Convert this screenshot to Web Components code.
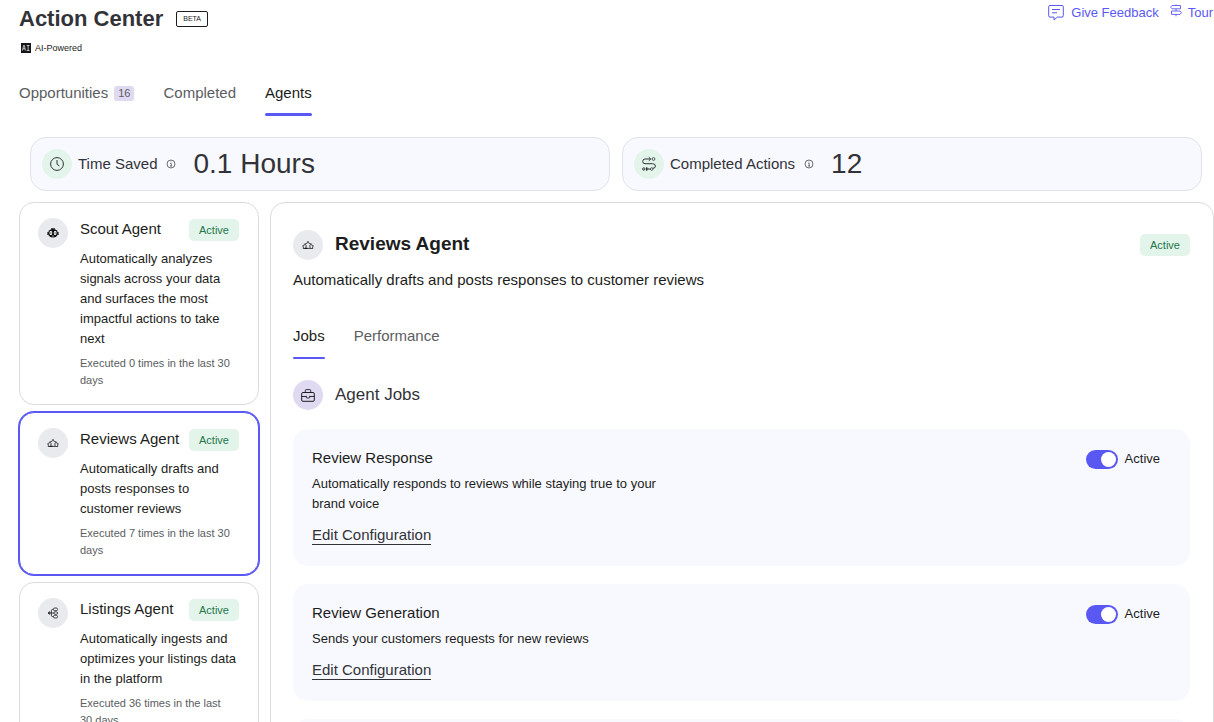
<!DOCTYPE html>
<html lang="en">
<head>
<meta charset="UTF-8">
<meta name="viewport" content="width=device-width, initial-scale=1.0">
<title>Action Center</title>
<style>
    html {
        scrollbar-width: none;
    }
    body {
        margin: 0;
        background-color: white;
        color: #1c1d20;
        font-family: "Liberation Sans", Arial, sans-serif;
        font-size: 15px;
        --accent: #5a58f2;
        --border: #dadbe0;
        --muted: #5b5d61;
        --heading: #323338;
        --surface: #f8f9ff;
    }
    main {
        padding: 6px 0 0 19px;
    }
    .stats {
        display: grid;
        grid-template-columns: 1fr 1fr;
        gap: 12px;
        margin: 21px 12px 11px 11px;
    }
    .content {
        display: grid;
        grid-template-columns: 240px 1fr;
        gap: 11px;
    }
    .agents {
        display: flex;
        flex-direction: column;
        gap: 7px;
    }
</style>
</head>
<body>
<main>
    <page-header>Action Center</page-header>
    <tab-bar size="large">
        <tab-item count="16">Opportunities</tab-item>
        <tab-item>Completed</tab-item>
        <tab-item active>Agents</tab-item>
    </tab-bar>
    <section class="stats">
        <stat-card icon="clock" value="0.1 Hours">Time Saved</stat-card>
        <stat-card icon="route" value="12">Completed Actions</stat-card>
    </section>
    <div class="content">
        <div class="agents">
            <agent-card icon="robot" name="Scout Agent" executed="Executed 0 times in the last 30 days">Automatically analyzes signals across your data and surfaces the most impactful actions to take next</agent-card>
            <agent-card selected icon="stars" name="Reviews Agent" executed="Executed 7 times in the last 30 days">Automatically drafts and posts responses to customer reviews</agent-card>
            <agent-card icon="listings" name="Listings Agent" executed="Executed 36 times in the last 30 days">Automatically ingests and optimizes your listings data in the platform</agent-card>
        </div>
        <agent-panel icon="stars" name="Reviews Agent" description="Automatically drafts and posts responses to customer reviews">
            <job-card name="Review Response">Automatically responds to reviews while staying true to your brand voice</job-card>
            <job-card name="Review Generation">Sends your customers requests for new reviews</job-card>
            <job-card></job-card>
        </agent-panel>
    </div>
</main>

<script>
const icons = {
    feedback: `<svg width="16" height="17" viewBox="0 0 16 17"><path d="M2 1.5h12q1.3 0 1.3 1.3v9q0 1.3-1.3 1.3H9.2L6 16v-2.9H2q-1.3 0-1.3-1.3v-9q0-1.3 1.300-1.3zM4 5.500h8M4 8.800h5"/></svg>`,
    signpost: `<svg width="12" height="13" viewBox="0 0 12 13" stroke-width=".9"><path d="M6 .5v1M6 4.800V7M6 10.400v2M2 1.500h8.500v3.300H2L.6 3.200zM1.500 7H10l1.400 1.700-1.400 1.700H1.500z"/></svg>`,
    info: `<svg width="10" height="10" viewBox="0 0 10 10" stroke-width=".7"><circle cx="5" cy="5" r="4"/><path d="M4.300 4.500h.9v2.600M4.100 7.100h2M5 2.700v.8"/></svg>`,
    clock: `<svg width="16" height="16" viewBox="0 0 16 16"><circle cx="8" cy="8" r="6.400"/><path d="M8 4v4.200l2.400 1.800"/></svg>`,
    route: `<svg width="16" height="16" viewBox="0 0 16 16"><path d="M9.500 3H4Q1.700 3 1.700 5.400T4 7.700h7.500q2.900 0 2.900 2.300t-2.500 2.300M7.800 1.200L9.800 3 7.800 4.800"/><circle cx="12.500" cy="3" r="1.400" stroke-width=".8"/><circle cx="2.800" cy="13" r="1.200"/><circle cx="10.700" cy="13" r="1.300" stroke-width=".8"/><path d="M5.500 11.500L7.500 13l-2 1.500zM7.500 13h1.500"/></svg>`,
    robot: `<svg width="12" height="12" viewBox="0 0 12 12"><ellipse cx="6" cy="6.300" rx="5" ry="4.300" fill="#111" stroke="none"/><path d="M.9 5v3M11.100 5v3M4 1.800h4" stroke="#111"/><rect x="2.600" y="4" width="2.500" height="4" rx="1.200" fill="#fff" stroke="none"/><rect x="6.900" y="4" width="2.500" height="4" rx="1.200" fill="#fff" stroke="none"/><path d="M3.900 5.200v1.600M8.100 5.200v1.600" stroke="#111" stroke-width=".8"/><path d="M5 9h2" stroke="#fff" stroke-width=".6"/></svg>`,
    stars: `<svg width="12" height="12" viewBox="0 0 12 12" stroke-width=".8"><path d="M6 2.300l1.200 2.200 2.100.4-1.500 1.700.4 2.800H3.800l.4-2.800-1.500-1.700 2.100-.4zM2.900 6.300l-.6-.8-.6 1.100-1.200.2.900 1-.2 1.700h2.600M9.100 6.300l.6-.8.6 1.100 1.200.2-.9 1 .2 1.700H8.200"/><path d="M2.500 9.400h3" stroke-width="1.200"/></svg>`,
    listings: `<svg width="12" height="12" viewBox="0 0 12 12" stroke-width=".8"><rect x="6.500" y="1" width="4" height="2.700" rx="1.200"/><rect x="7" y="4.700" width="3.500" height="2.600" rx="1.200"/><rect x="6.500" y="8.300" width="4" height="2.700" rx="1.200"/><path d="M1 6h6M6.500 2.400h-.8q-1.300 0-1.300 1.300v4.600q0 1.300 1.300 1.300h.8M2.700 4.600L1 6l1.700 1.400z"/></svg>`,
    briefcase: `<svg width="14" height="14" viewBox="0 0 14 14"><rect x=".7" y="4.500" width="12.600" height="8.800" rx="1.200"/><path d="M4.300 4.300V2.500q0-.9.900-.9h3.600q.9 0 .9.900v1.800M.7 8.500h4.600M8.700 8.500h4.600M5.300 7.800v1.500q0 .7.700.7h2q.7 0 .7-.7V7.800" stroke-width=".9"/></svg>`,
    ai: `<svg width="10" height="10" viewBox="0 0 10 10"><rect width="10" height="10" fill="#15161a" stroke="none"/><path d="M1.500 7.500l1.100-5h.8l1 5M2 5.800h2M5.700 2.500h2.800M7.100 2.500v5M5.700 7.500h2.800" stroke="#fff" stroke-width=".7"/></svg>`
};

class BaseElement extends HTMLElement {
    constructor() {
        super();
        this.attachShadow({ mode: 'open' });
    }
    connectedCallback() {
        this.shadowRoot.innerHTML = `
            <style>
                :host { display: block; }
                * { box-sizing: border-box; }
                h1, h2, h3, p { margin: 0; font-weight: normal; }
                button { margin: 0; padding: 0; border: 0; background: none; font: inherit; color: inherit; text-align: left; cursor: pointer; }
                svg { display: block; flex: none; fill: none; stroke: currentColor; }
            </style>
            ${this.getStyles()}
            ${this.getTemplate()}
        `;
    }
}

class PageHeader extends BaseElement {
    getTemplate() {
        return `
            <header>
                <div>
                    <div class="title"><h1><slot></slot></h1><span class="beta">BETA</span></div>
                    <div class="powered">${icons.ai}<span>AI-Powered</span></div>
                </div>
                <nav>
                    <a href="#feedback">${icons.feedback}Give Feedback</a>
                    <a href="#tour">${icons.signpost}Tour</a>
                </nav>
            </header>
        `;
    }
    getStyles() {
        return `
            <style>
                header {
                    display: flex;
                    justify-content: space-between;
                    align-items: flex-start;
                }
                .title {
                    display: flex;
                    align-items: center;
                    gap: 13px;
                }
                h1 {
                    color: var(--heading);
                    font-size: 22px;
                    font-weight: bold;
                    line-height: 26px;
                }
                .beta {
                    padding: 0 6px;
                    border: 1px solid #1c1d20;
                    border-radius: 2px;
                    font-size: 7px;
                    line-height: 14px;
                }
                .powered {
                    display: flex;
                    align-items: center;
                    gap: 4px;
                    margin: 9px 0 0 2px;
                    font-size: 9px;
                    line-height: 14px;
                }
                nav {
                    display: flex;
                    gap: 11px;
                    padding-right: 1px;
                }
                a {
                    display: flex;
                    gap: 7px;
                    align-items: center;
                    height: 13px;
                    color: var(--accent);
                    font-size: 13px;
                    line-height: 13px;
                    text-decoration: none;
                }
                a:last-child {
                    gap: 6px;
                }
                a:last-child svg {
                    align-self: flex-end;
                    margin-bottom: 2px;
                }
            </style>
        `;
    }
}

class TabBar extends BaseElement {
    getTemplate() {
        return `<nav><slot></slot></nav>`;
    }
    getStyles() {
        return `
            <style>
                :host { --tab-height: 34px; --tab-line: 2px; }
                :host([size="large"]) { --tab-height: 35px; --tab-line: 3px; margin-top: 26px; }
                nav {
                    display: flex;
                    gap: 29px;
                }
            </style>
        `;
    }
}

class TabItem extends BaseElement {
    getTemplate() {
        const count = this.getAttribute('count');
        return `<button type="button"><slot></slot>${count ? `<span>${count}</span>` : ''}</button>`;
    }
    getStyles() {
        return `
            <style>
                button {
                    display: flex;
                    align-items: flex-start;
                    gap: 6px;
                    height: var(--tab-height);
                    color: var(--muted);
                    line-height: 24px;
                    position: relative;
                }
                :host([active]) button {
                    color: #1c1d20;
                }
                :host([active]) button::after {
                    content: "";
                    position: absolute;
                    inset: auto 0 0 0;
                    height: var(--tab-line);
                    border-radius: 2px;
                    background-color: var(--accent);
                }
                span {
                    margin-top: 5px;
                    padding: 0 4px;
                    border-radius: 3px;
                    background-color: #e0d9f2;
                    font-size: 11px;
                    line-height: 15px;
                }
            </style>
        `;
    }
}

class RoundIcon extends BaseElement {
    getTemplate() {
        return icons[this.getAttribute('name')];
    }
    getStyles() {
        return `
            <style>
                :host {
                    display: grid;
                    flex: none;
                    place-items: center;
                    width: 30px;
                    height: 30px;
                    border-radius: 50%;
                    background-color: #e9eaee;
                }
                :host([tone="green"]) { background-color: #e3f4eb; }
                :host([tone="purple"]) { background-color: #e0d9f2; }
            </style>
        `;
    }
}

class StatusBadge extends BaseElement {
    getTemplate() {
        return `<slot></slot>`;
    }
    getStyles() {
        return `
            <style>
                :host {
                    flex: none;
                    padding: 0 10px;
                    border-radius: 5px;
                    background-color: #e3f4eb;
                    color: #23774a;
                    font-size: 11px;
                    line-height: 22px;
                }
            </style>
        `;
    }
}

class StatCard extends BaseElement {
    getTemplate() {
        return `
            <round-icon name="${this.getAttribute('icon')}" tone="green"></round-icon>
            <h2><slot></slot></h2>
            ${icons.info}
            <strong>${this.getAttribute('value')}</strong>
        `;
    }
    getStyles() {
        return `
            <style>
                :host {
                    display: flex;
                    align-items: center;
                    box-sizing: border-box;
                    padding: 10px 11px;
                    border: 1px solid #e1e2ec;
                    border-radius: 16px;
                    background-color: var(--surface);
                    color: var(--heading);
                }
                h2 {
                    margin: 0 9px 0 6px;
                    font-size: 15px;
                    line-height: 18px;
                }
                strong {
                    margin-left: 17px;
                    font-size: 28px;
                    font-weight: normal;
                    line-height: 32px;
                }
            </style>
        `;
    }
}

class AgentCard extends BaseElement {
    getTemplate() {
        return `
            <button type="button">
                <round-icon name="${this.getAttribute('icon')}"></round-icon>
                <span class="body">
                    <span class="top"><span>${this.getAttribute('name')}</span><status-badge>Active</status-badge></span>
                    <span class="text"><slot></slot></span>
                    <span class="executed">${this.getAttribute('executed')}</span>
                </span>
            </button>
        `;
    }
    getStyles() {
        return `
            <style>
                button {
                    display: flex;
                    align-items: flex-start;
                    gap: 12px;
                    width: 100%;
                    padding: 15px 19px 15px 18px;
                    border: 1px solid var(--border);
                    border-radius: 15px;
                    background-color: white;
                }
                :host([selected]) button {
                    border-color: var(--accent);
                    box-shadow: 0 0 0 1px var(--accent);
                }
                .body {
                    flex: 1;
                    padding-top: 1px;
                }
                .top {
                    display: flex;
                    justify-content: space-between;
                    align-items: flex-start;
                    line-height: 20px;
                }
                .text {
                    display: block;
                    margin-top: 8px;
                    font-size: 13px;
                    line-height: 20px;
                }
                .executed {
                    display: block;
                    margin-top: 6px;
                    padding-right: 5px;
                    color: var(--muted);
                    font-size: 11px;
                    line-height: 17px;
                }
            </style>
        `;
    }
}

class AgentPanel extends BaseElement {
    getTemplate() {
        return `
            <section>
                <div class="head">
                    <round-icon name="${this.getAttribute('icon')}"></round-icon>
                    <h2>${this.getAttribute('name')}</h2>
                    <status-badge>Active</status-badge>
                </div>
                <p>${this.getAttribute('description')}</p>
                <tab-bar>
                    <tab-item active>Jobs</tab-item>
                    <tab-item>Performance</tab-item>
                </tab-bar>
                <div class="head jobs">
                    <round-icon name="briefcase" tone="purple"></round-icon>
                    <h3>Agent Jobs</h3>
                </div>
                <div class="list"><slot></slot></div>
            </section>
        `;
    }
    getStyles() {
        return `
            <style>
                section {
                    height: 100%;
                    padding: 27px 23px 23px 22px;
                    border: 1px solid var(--border);
                    border-radius: 15px;
                }
                .head {
                    display: flex;
                    align-items: center;
                    gap: 12px;
                }
                h2 {
                    flex: 1;
                    font-size: 19px;
                    font-weight: bold;
                    line-height: 28px;
                    padding-bottom: 2px;
                }
                p {
                    margin: 9px 0 33px;
                    line-height: 22px;
                }
                tab-bar {
                    --tab-height: 35px;
                }
                .jobs {
                    margin-top: 21px;
                }
                h3 {
                    color: var(--heading);
                    font-size: 17px;
                }
                .list {
                    display: flex;
                    flex-direction: column;
                    gap: 18px;
                    margin-top: 19px;
                }
            </style>
        `;
    }
}

class JobCard extends BaseElement {
    getTemplate() {
        const name = this.getAttribute('name');
        if (!name) {
            return `<article></article>`;
        }
        return `
            <article>
                <div>
                    <h3>${name}</h3>
                    <p><slot></slot></p>
                    <a href="#edit">Edit Configuration</a>
                </div>
                <label><input type="checkbox" role="switch" checked>Active</label>
            </article>
        `;
    }
    getStyles() {
        return `
            <style>
                article {
                    display: flex;
                    justify-content: space-between;
                    align-items: flex-start;
                    min-height: 117px;
                    padding: 19px 30px 21px 19px;
                    border-radius: 15px;
                    background-color: var(--surface);
                }
                h3 {
                    font-size: 15px;
                    line-height: 20px;
                }
                p {
                    max-width: 360px;
                    margin: 6px 0 12px;
                    font-size: 13px;
                    line-height: 20px;
                }
                a {
                    display: inline-block;
                    border-bottom: 1px solid var(--heading);
                    color: var(--heading);
                    line-height: 18px;
                    text-decoration: none;
                }
                label {
                    display: flex;
                    align-items: center;
                    gap: 7px;
                    font-size: 13px;
                    line-height: 22px;
                }
                input {
                    appearance: none;
                    display: flex;
                    width: 32px;
                    height: 19px;
                    margin: 0;
                    padding: 2px;
                    border-radius: 10px;
                    background-color: #b5b6bd;
                }
                input::before {
                    content: "";
                    width: 15px;
                    height: 15px;
                    border-radius: 50%;
                    background-color: white;
                }
                input:checked {
                    justify-content: flex-end;
                    background-color: var(--accent);
                }
            </style>
        `;
    }
}

customElements.define('page-header', PageHeader);
customElements.define('tab-bar', TabBar);
customElements.define('tab-item', TabItem);
customElements.define('round-icon', RoundIcon);
customElements.define('status-badge', StatusBadge);
customElements.define('stat-card', StatCard);
customElements.define('agent-card', AgentCard);
customElements.define('agent-panel', AgentPanel);
customElements.define('job-card', JobCard);
</script>
</body>
</html>
